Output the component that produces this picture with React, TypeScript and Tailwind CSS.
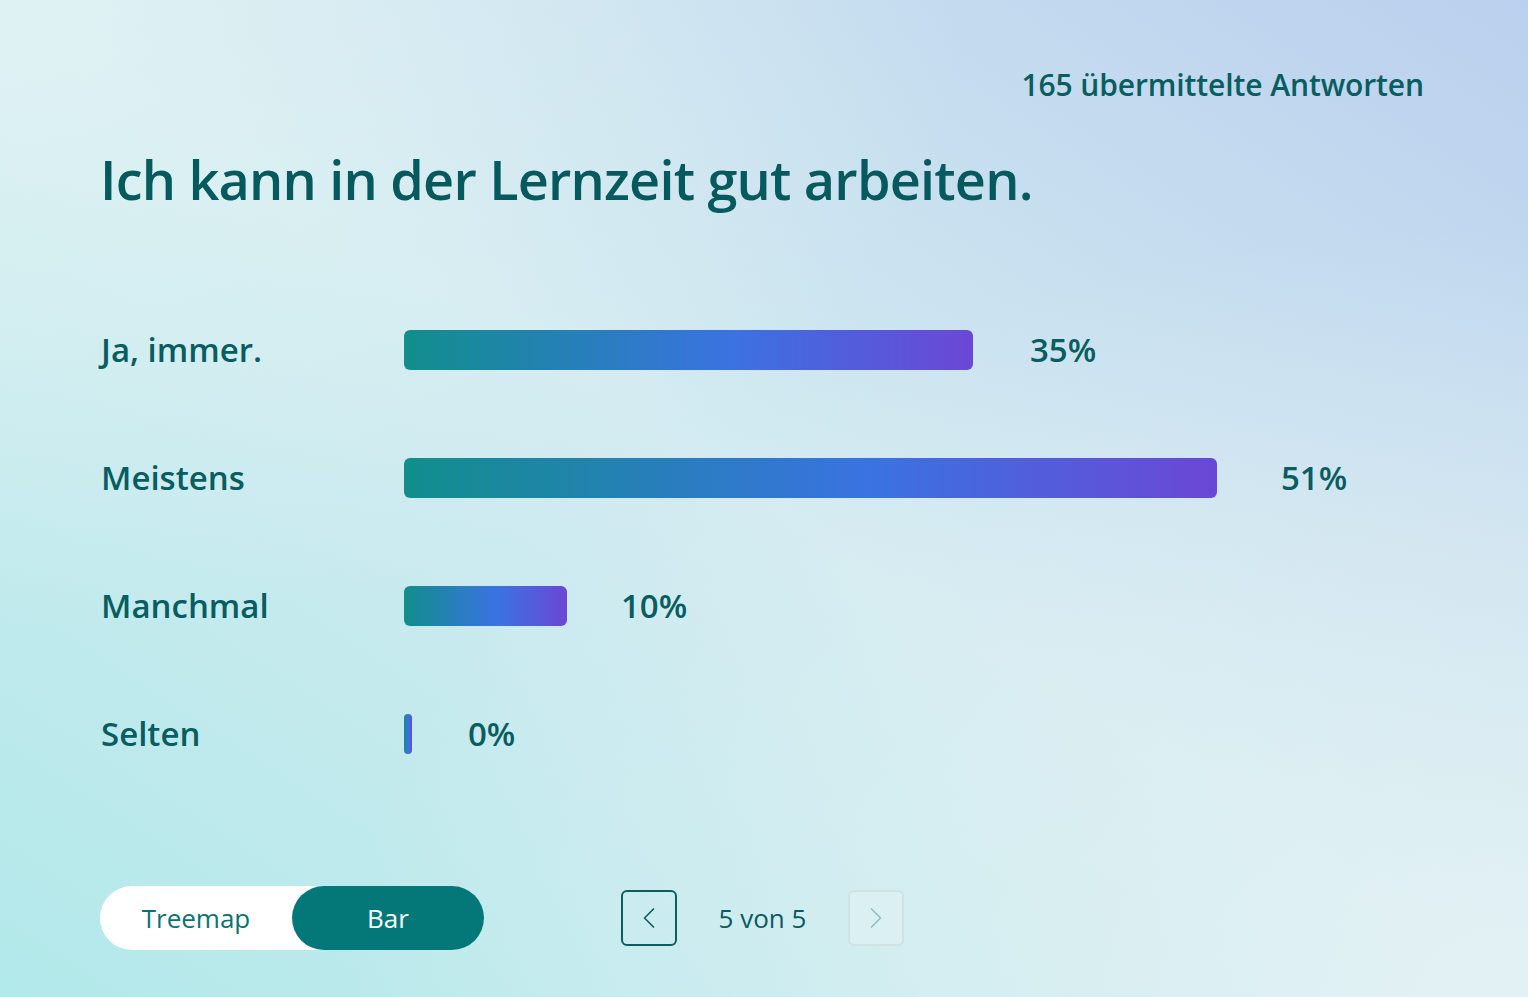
import { ChevronLeft, ChevronRight } from 'lucide-react';

type Row = {
    label: string;
    percent: string;
    width: number;
    gap: string;
};

const rows: Row[] = [
    { label: "Ja, immer.", percent: "35%", width: 569, gap: "ml-[57px]" },
    { label: "Meistens", percent: "51%", width: 813, gap: "ml-[64px]" },
    { label: "Manchmal", percent: "10%", width: 163, gap: "ml-[54px]" },
    { label: "Selten", percent: "0%", width: 8, gap: "ml-[56px]" },
];

const BarRow: React.FC<{ row: Row }> = ({ row }) => {
    return (
        <div className="flex items-center h-[128px]">
            <div className="w-[304px] text-[33px] font-semibold text-[#075d60] pl-[1px]">{row.label}</div>
            <div
                className="h-10 rounded-md bg-[linear-gradient(to_right,#118e8c_0%,#3b72e2_58%,#6b47d6_100%)]"
                style={{ width: row.width }}
            />
            <div className={`${row.gap} text-[33px] font-semibold text-[#075d60]`}>{row.percent}</div>
        </div>
    );
};

export default function App() {
    return (
        <div
            className="relative w-full h-[997px] overflow-hidden text-[#075d60] bg-[linear-gradient(to_top_right,#b2e9ea_0%,#d3ebf1_50%,#bad0ee_100%)]"
            style={{ fontFamily: '"Open Sans", "Noto Sans", sans-serif' }}
        >
            <div className="absolute inset-0 bg-[radial-gradient(ellipse_at_0%_0%,rgba(226,244,244,0.8)_0%,rgba(226,244,244,0)_45%),radial-gradient(ellipse_at_100%_100%,rgba(228,242,244,0.9)_0%,rgba(228,242,244,0)_55%)]" />
            <div className="relative flex flex-col pl-[100px] pr-[104px]">
                <div className="flex justify-end pt-[64px] h-[124px]">
                    <span className="text-[30px] font-semibold tracking-[-0.1px] leading-[42px]">165 übermittelte Antworten</span>
                </div>
                <h1 className="mt-[20px] text-[54px] font-semibold leading-[70px] tracking-[-0.8px] text-[#065a5d]">
                    Ich kann in der Lernzeit gut arbeiten.
                </h1>
                <div className="flex flex-col mt-[72px]">
                    {rows.map((row) => (
                        <BarRow key={row.label} row={row} />
                    ))}
                </div>
                <div className="flex items-center mt-[88px]">
                    <div className="flex w-[384px] h-16 rounded-full bg-white">
                        <button className="w-[192px] h-16 rounded-full text-[26px] text-[#0a7272]">Treemap</button>
                        <button className="w-[192px] h-16 rounded-full bg-[#047878] text-[26px] text-white">Bar</button>
                    </div>
                    <div className="flex items-center ml-[137px]">
                        <button className="w-14 h-14 flex items-center justify-center rounded-md border-2 border-[#0b5d60]">
                            <ChevronLeft className="w-9 h-9 text-[#0b5d60]" strokeWidth={1.1} />
                        </button>
                        <span className="w-[171px] text-center text-[26px] text-[#0b5a5e]">5 von 5</span>
                        <button className="w-14 h-14 flex items-center justify-center rounded-md border-2 border-[#cfe2e4] bg-white/20">
                            <ChevronRight className="w-9 h-9 text-[#8cc0c3]" strokeWidth={1.1} />
                        </button>
                    </div>
                </div>
            </div>
        </div>
    );
}
